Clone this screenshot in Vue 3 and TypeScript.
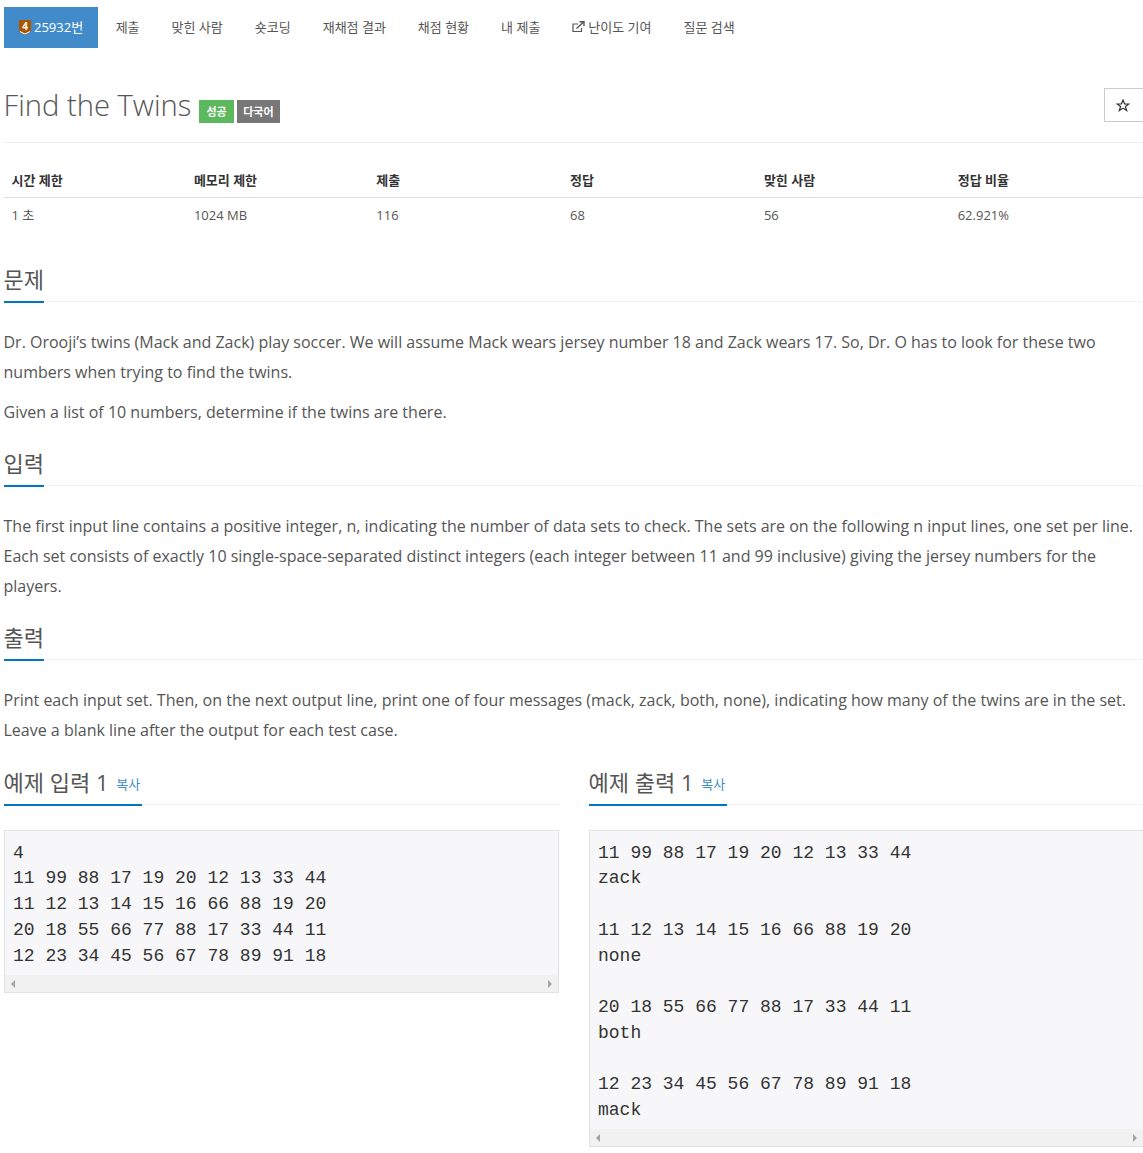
<script setup lang="ts">
const tabs = ['제출', '맞힌 사람', '숏코딩', '재채점 결과', '채점 현황', '내 제출']
const heads = ['시간 제한', '메모리 제한', '제출', '정답', '맞힌 사람', '정답 비율']
const vals = ['1 초', '1024 MB', '116', '68', '56', '62.921%']
const input = `4
11 99 88 17 19 20 12 13 33 44
11 12 13 14 15 16 66 88 19 20
20 18 55 66 77 88 17 33 44 11
12 23 34 45 56 67 78 89 91 18`
const output = `11 99 88 17 19 20 12 13 33 44
zack

11 12 13 14 15 16 66 88 19 20
none

20 18 55 66 77 88 17 33 44 11
both

12 23 34 45 56 67 78 89 91 18
mack`
</script>

<template>
  <div class="page">
    <div class="container">
      <ul class="nav">
        <li class="tab active">
          <svg class="tier" width="14" height="15" viewBox="0 0 14 15">
            <path d="M1 0H13V11L7 15L1 11Z" fill="#ad5600" />
            <path d="M2 11.5L7 14L12 11.5" fill="none" stroke="#fff" stroke-width="1" />
            <text x="7" y="9.5" text-anchor="middle" class="tier-num">4</text>
          </svg>
          25932번
        </li>
        <li v-for="t in tabs" :key="t" class="tab">{{ t }}</li>
        <li class="tab wide">
          <svg class="ext" width="13" height="12" viewBox="0 0 13 12">
            <path d="M9.5 7V10.5H1V3H6" fill="none" stroke="#555" stroke-width="1.2" />
            <path d="M4.5 7.5L11 1.5M7.5 0.8H12V5" fill="none" stroke="#555" stroke-width="1.4" />
          </svg>
          난이도 기여
        </li>
        <li class="tab">질문 검색</li>
      </ul>

      <div class="title-row">
        <h1 class="title">Find the Twins</h1>
        <span class="badge green">성공</span>
        <span class="badge gray">다국어</span>
        <button class="star">
          <svg width="14" height="13" viewBox="0 0 14 13">
            <path d="M7 1L8.6 5H12.8L9.4 7.5L10.7 11.6L7 9.1L3.3 11.6L4.6 7.5L1.2 5H5.4Z" fill="none" stroke="#333" stroke-width="1.2" />
          </svg>
        </button>
      </div>

      <table class="stats">
        <colgroup>
          <col class="c16" /><col class="c16" /><col class="c17" /><col class="c17" /><col class="c17" /><col class="c17" />
        </colgroup>
        <thead>
          <tr><th v-for="h in heads" :key="h">{{ h }}</th></tr>
        </thead>
        <tbody>
          <tr><td v-for="v in vals" :key="v">{{ v }}</td></tr>
        </tbody>
      </table>

      <section class="sec first">
        <div class="head"><h2>문제</h2></div>
        <p>Dr. Orooji’s twins (Mack and Zack) play soccer. We will assume Mack wears jersey number 18 and Zack wears 17. So, Dr. O has to look for these two numbers when trying to find the twins.</p>
        <p>Given a list of 10 numbers, determine if the twins are there.</p>
      </section>

      <section class="sec">
        <div class="head"><h2>입력</h2></div>
        <p>The first input line contains a positive integer, n, indicating the number of data sets to check. The sets are on the following n input lines, one set per line. Each set consists of exactly 10 single-space-separated distinct integers (each integer between 11 and 99 inclusive) giving the jersey numbers for the players.</p>
      </section>

      <section class="sec">
        <div class="head"><h2>출력</h2></div>
        <p>Print each input set. Then, on the next output line, print one of four messages (mack, zack, both, none), indicating how many of the twins are in the set. Leave a blank line after the output for each test case.</p>
      </section>

      <div class="samples">
        <section class="sample">
          <div class="head"><h2>예제 입력 1 <a class="copy">복사</a></h2></div>
          <div class="code">
            <pre>{{ input }}</pre>
            <div class="bar"><i class="arr left"></i><i class="arr right"></i></div>
          </div>
        </section>
        <section class="sample">
          <div class="head"><h2>예제 출력 1 <a class="copy">복사</a></h2></div>
          <div class="code">
            <pre>{{ output }}</pre>
            <div class="bar"><i class="arr left"></i><i class="arr right"></i></div>
          </div>
        </section>
      </div>
    </div>
  </div>
</template>

<style>
html, body { margin: 0; overflow: hidden; background: #fff; }
</style>

<style scoped>
.page {
  width: 1143px;
  height: 1153px;
  overflow: hidden;
  font-family: "Open Sans", "Noto Sans CJK KR", sans-serif;
  color: #555;
}
.container { width: 1140px; margin-left: 3.5px; padding-top: 7px; }
.nav { display: flex; list-style: none; margin: 0; padding: 0; gap: 2px; }
.tab {
  display: flex;
  align-items: center;
  gap: 2px;
  height: 41px;
  box-sizing: border-box;
  padding: 0 15px 2px;
  font-size: 13px;
  color: #555;
  white-space: nowrap;
}
.tab.active { background: #428bca; color: #fff; padding: 0 14.5px 2px; margin-right: 1px; }
.tab.wide { gap: 3px; }
.tier { display: block; margin-top: 1px; }
.tier-num { font: 700 10px "Open Sans", sans-serif; fill: #fff; }

.title-row {
  position: relative;
  display: flex;
  align-items: flex-start;
  height: 64px;
  margin-top: 30px;
  border-bottom: 1px solid #eee;
}
.title {
  margin: 6px 8px 0 0;
  font-size: 29.2px;
  font-weight: 300;
  line-height: 42px;
  color: #555;
}
.badge {
  display: block;
  margin-top: 22px;
  height: 23px;
  line-height: 23px;
  padding: 0 7px;
  font-size: 11px;
  font-weight: 700;
  color: #fff;
  margin-right: 3px;
}
.green { background: #5cb85c; }
.gray { background: #777; padding: 0 6.5px; }
.star {
  position: absolute;
  top: 10px;
  left: 1100px;
  width: 42px;
  height: 34px;
  background: #fff;
  border: 1px solid #ccc;
  padding: 0 4px 0 0;
  display: flex;
  align-items: center;
  justify-content: center;
}

.stats { width: 100%; border-collapse: collapse; table-layout: fixed; margin-top: 18px; font-size: 13px; }
.c16 { width: 16%; }
.c17 { width: 17%; }
.stats th {
  text-align: left;
  padding: 8.5px 8px 7.5px;
  height: 36px;
  box-sizing: border-box;
  font-weight: 700;
  color: #333;
  border-bottom: 1px solid #ddd;
  font-size: 13px;
}
.stats td { padding: 7.5px 8px 8.5px; height: 35px; box-sizing: border-box; color: #555; }

.sec { margin-top: 21px; }
.sec.first { margin-top: 31px; }
.head { border-bottom: 1px dotted #e5e5e5; margin-bottom: 25px; height: 37px; }
h2 {
  display: inline-block;
  margin: 0;
  height: 37px;
  line-height: 30px;
  box-sizing: content-box;
  font-size: 22px;
  font-weight: 400;
  color: #555;
  border-bottom: 2px solid #0076c0;
}
p { margin: 0 0 10px; font-size: 16px; line-height: 30px; color: #555; }

.samples { display: flex; gap: 30px; margin-top: 22px; }
.sample { width: 555px; flex: none; }
.copy { font-size: 13px; color: #428bca; margin: 0 2px; vertical-align: 2px; }
.code { background: #f7f7f9; border: 1px solid #e1e1e8; }
pre {
  margin: 0;
  padding: 10.2px 9.5px 5.3px 8.5px;
  font-family: "Liberation Mono", monospace;
  font-size: 18px;
  line-height: 25.7px;
  color: #333;
}
.bar { position: relative; height: 17px; background: #f1f1f1; }
.arr { position: absolute; top: 5px; width: 0; height: 0; border-style: solid; }
.left { left: 6px; border-width: 4px 4px 4px 0; border-color: transparent #a3a3a3 transparent transparent; }
.right { right: 6px; border-width: 4px 0 4px 4px; border-color: transparent transparent transparent #a3a3a3; }
</style>
